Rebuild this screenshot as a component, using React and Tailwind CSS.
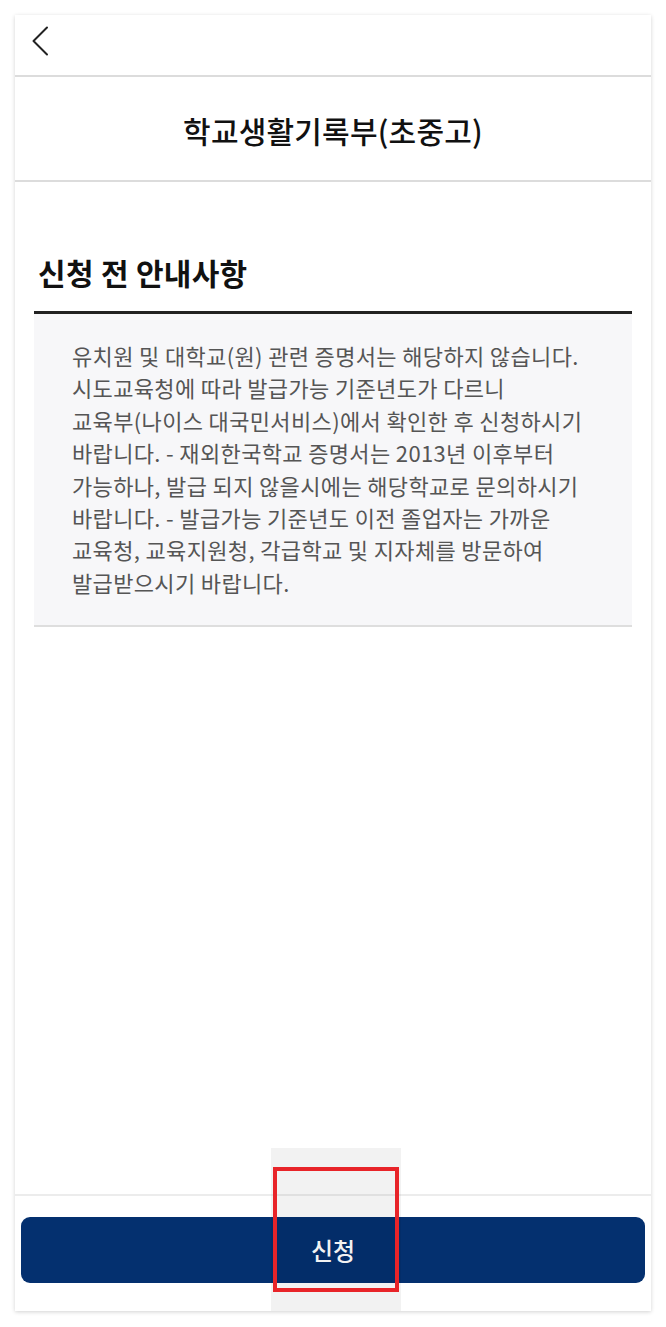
const notice = [
  '유치원 및 대학교(원) 관련 증명서는 해당하지 않습니다.',
  '시도교육청에 따라 발급가능 기준년도가 다르니',
  '교육부(나이스 대국민서비스)에서 확인한 후 신청하시기',
  '바랍니다. - 재외한국학교 증명서는 2013년 이후부터',
  '가능하나, 발급 되지 않을시에는 해당학교로 문의하시기',
  '바랍니다. - 발급가능 기준년도 이전 졸업자는 가까운',
  '교육청, 교육지원청, 각급학교 및 지자체를 방문하여',
  '발급받으시기 바랍니다.',
];

const BackIcon = () => (
  <svg width="18" height="30" viewBox="0 0 18 30" fill="none">
    <polyline points="16,1.5 2.5,15 16,28.5" stroke="#222" strokeWidth="2" strokeLinecap="round" strokeLinejoin="round" />
  </svg>
);

export default function App() {
  return (
    <div
      className="relative h-[1327px] w-[666px] bg-white p-[15px]"
      style={{ fontFamily: '"Noto Sans CJK KR", "Noto Sans", sans-serif' }}
    >
      <div className="flex h-[1296px] w-[636px] flex-col bg-white shadow-[0_1px_4px_rgba(0,0,0,0.18)]">
        {/* top bar */}
        <div className="h-[62px] border-b-2 border-[#dcdcdc] pl-[16px] pt-[11px]">
          <BackIcon />
        </div>

        {/* page title */}
        <div className="flex h-[105px] items-center justify-center border-b-2 border-[#dcdcdc] pt-[4px]">
          <h1 className="text-[30px] font-medium tracking-[0.2px] text-[#111]">학교생활기록부(초중고)</h1>
        </div>

        {/* notice section */}
        <div className="flex-1 px-[19px] pt-[70px]">
          <h2 className="border-b-[3px] border-[#222] pb-[19px] pl-[4px] text-[30px] font-bold leading-[40px] tracking-[0.3px] text-[#111]">
            신청 전 안내사항
          </h2>
          <div className="border-b-2 border-[#dedede] bg-[#f7f7f9] pl-[38px] pr-[10px] pt-[25px] pb-[27px]">
            {notice.map((line, i) => (
              <p key={i} className="whitespace-nowrap text-[22px] leading-[32.4px] tracking-[0.35px] text-[#555]">
                {line}
              </p>
            ))}
          </div>
        </div>

        {/* submit */}
        <div className="border-t-2 border-[#ececec] px-[6px] pt-[21px] pb-[28px]">
          <button className="flex h-[66px] w-full items-center justify-center rounded-[9px] bg-[#04306f] text-[24px] font-medium text-white">
            신청
          </button>
        </div>
      </div>

      {/* highlight marker around the button label */}
      <div className="pointer-events-none absolute left-[271px] top-[1148px] h-[163px] w-[130px] bg-black/5" />
      <div className="pointer-events-none absolute left-[273px] top-[1167px] h-[125px] w-[126px] border-4 border-[#e82429]" />
    </div>
  );
}
